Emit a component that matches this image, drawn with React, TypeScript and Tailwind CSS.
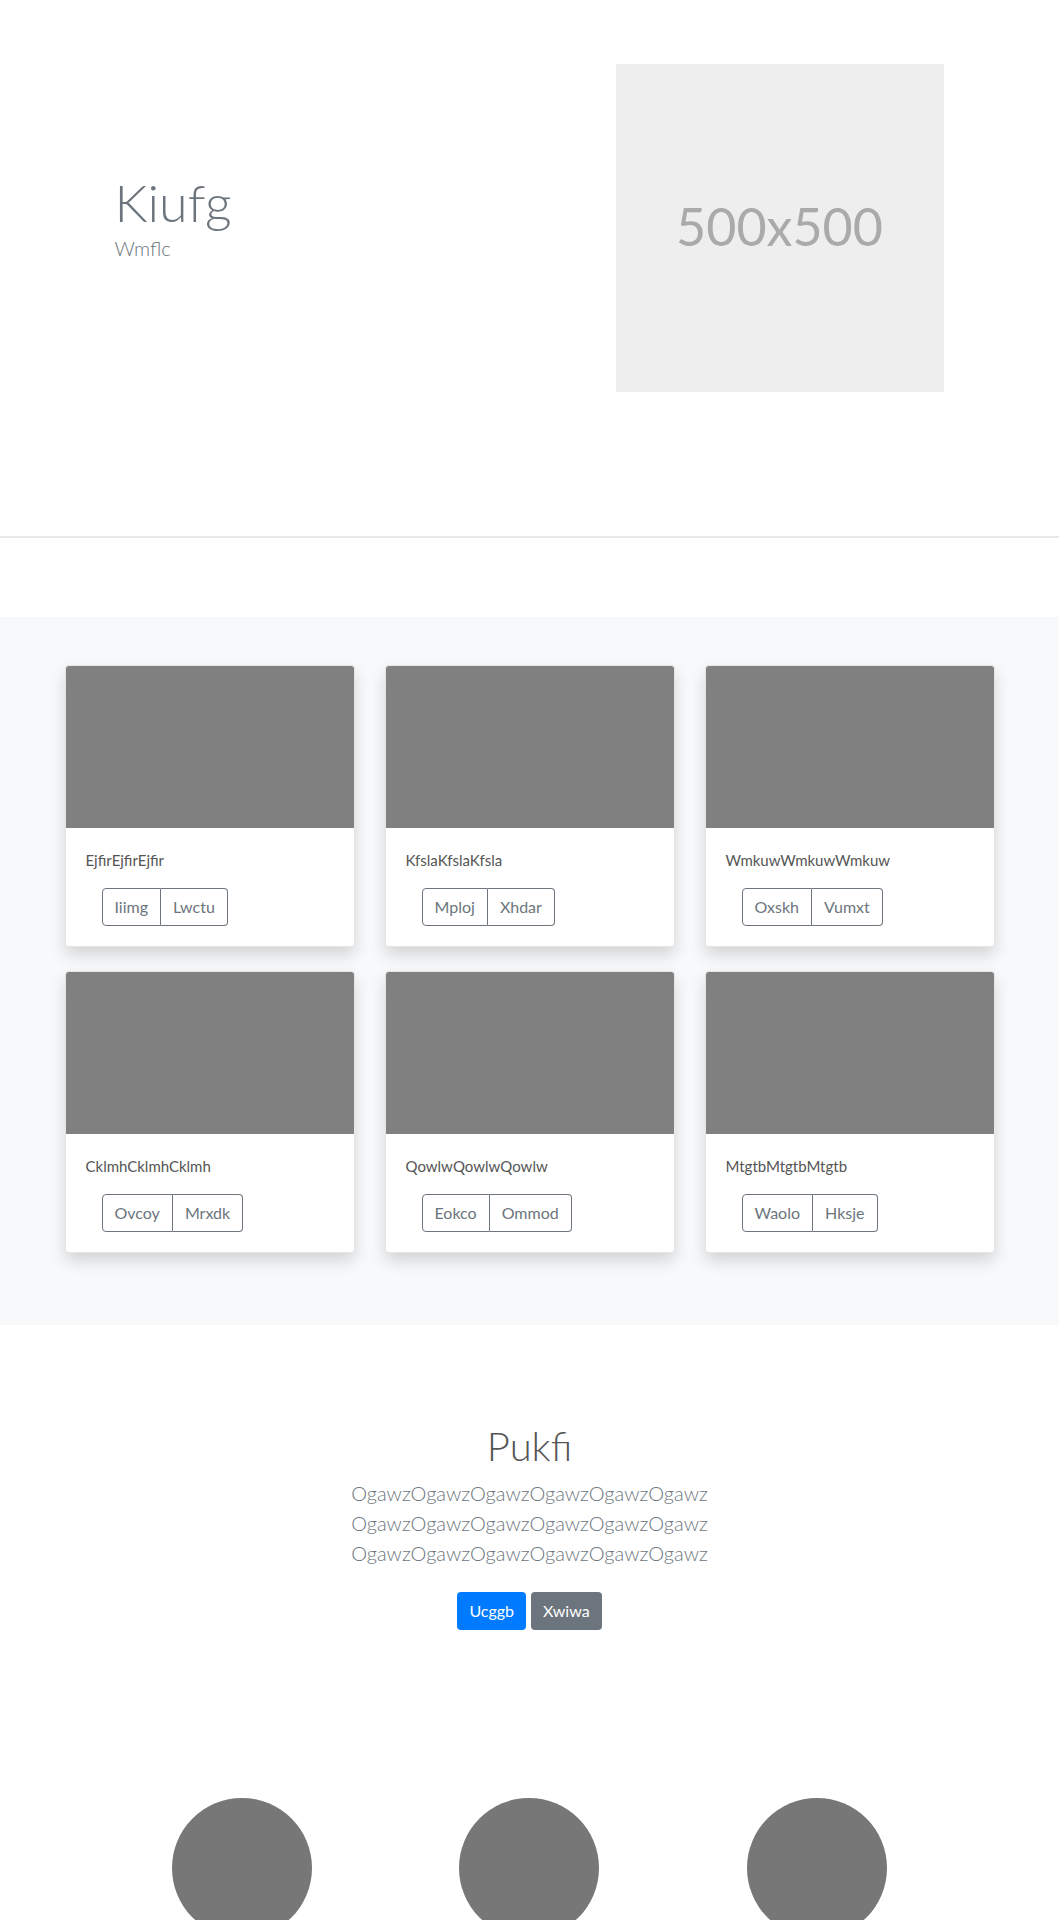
import React from 'react';

const cards = [
  { title: 'EjfirEjfirEjfir', actions: ['Iiimg', 'Lwctu'] },
  { title: 'KfslaKfslaKfsla', actions: ['Mploj', 'Xhdar'] },
  { title: 'WmkuwWmkuwWmkuw', actions: ['Oxskh', 'Vumxt'] },
  { title: 'CklmhCklmhCklmh', actions: ['Ovcoy', 'Mrxdk'] },
  { title: 'QowlwQowlwQowlw', actions: ['Eokco', 'Ommod'] },
  { title: 'MtgtbMtgtbMtgtb', actions: ['Waolo', 'Hksje'] },
];

const leadLines = ['OgawzOgawzOgawzOgawzOgawzOgawz', 'OgawzOgawzOgawzOgawzOgawzOgawz', 'OgawzOgawzOgawzOgawzOgawzOgawz'];

function AlbumCard({ title, actions }: { title: string; actions: string[] }) {
  return (
    <div className="overflow-hidden rounded-[4px] border border-black/10 bg-white shadow-[0_8px_16px_rgba(0,0,0,0.15)]">
      <div className="h-[162px] bg-[#808080]" />
      <div className="p-5">
        <p className="mb-4 text-[15px] leading-6 text-[#555]">{title}</p>
        <div className="ml-4 inline-flex">
          {actions.map((label, i) => (
            <button
              key={label}
              type="button"
              className={
                i === 0
                  ? 'h-[38px] rounded-l-[4px] border border-[#6c757d] px-3 text-[16px] text-[#6c757d]'
                  : 'h-[38px] rounded-r-[4px] border border-l-0 border-[#6c757d] px-3 text-[16px] text-[#6c757d]'
              }
            >
              {label}
            </button>
          ))}
        </div>
      </div>
    </div>
  );
}

export default function App() {
  return (
    <div className="bg-white font-['Lato','Liberation_Sans',sans-serif]">
      {/* Hero */}
      <section className="pt-16 pb-[144px]">
        <div className="mx-auto flex w-[930px]">
          <div className="w-[551px] pl-[50px] pt-[107px]">
            <h1 className="text-[52px] leading-[1.2] font-light text-[#6c757d]">Kiufg</h1>
            <p className="text-[20px] leading-[30px] font-light text-[#6c757d]">Wmflc</p>
          </div>
          <div className="flex h-[328px] w-[328px] items-center justify-center bg-[#eeeeee]">
            <span className="pb-1 text-[52px] text-[#aaaaaa]">500x500</span>
          </div>
        </div>
      </section>
      <div className="h-[2px] bg-[#e9e9e9]" />

      {/* Album */}
      <section className="mt-[79px] bg-[#f8f9fa] py-12">
        <div className="mx-auto grid w-[930px] grid-cols-3 gap-x-[30px] gap-y-6 pb-6">
          {cards.map((card) => (
            <AlbumCard key={card.title} title={card.title} actions={card.actions} />
          ))}
        </div>
      </section>

      {/* Call to action */}
      <section className="pt-[97px] text-center">
        <h1 className="mb-2 text-[40px] leading-[1.2] font-light text-[#555]">Pukfi</h1>
        <p className="mb-6 text-[20px] leading-[30px] font-light text-[#6c757d]">
          {leadLines.map((line, i) => (
            <span key={i} className="block">
              {line}
            </span>
          ))}
        </p>
        <div className="flex justify-center gap-[5px]">
          <button type="button" className="h-[38px] rounded-[4px] bg-[#007bff] px-3 text-[16px] text-white">
            Ucggb
          </button>
          <button type="button" className="h-[38px] rounded-[4px] bg-[#6c757d] px-3 text-[16px] text-white">
            Xwiwa
          </button>
        </div>
      </section>

      {/* Marketing circles */}
      <section className="pt-[168px] pb-10">
        <div className="mx-auto grid w-[862px] grid-cols-3">
          {[0, 1, 2].map((n) => (
            <div key={n} className="flex justify-center">
              <div className="h-[140px] w-[140px] rounded-full bg-[#777777]" />
            </div>
          ))}
        </div>
      </section>
    </div>
  );
}
